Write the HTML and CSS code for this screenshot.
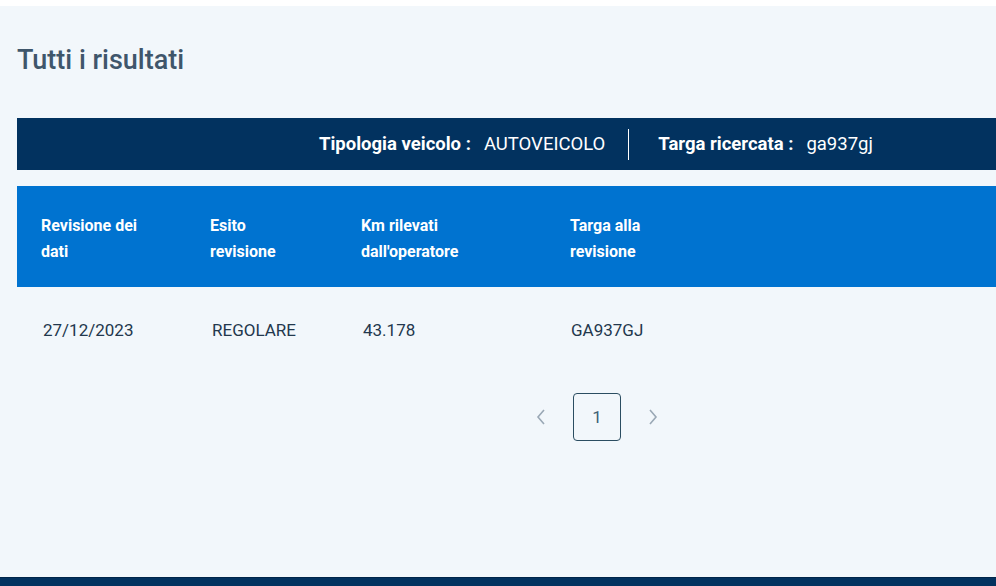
FILE: index.html
```html
<!DOCTYPE html>
<html lang="it">
<head>
<meta charset="utf-8">
<title>Tutti i risultati</title>
<link rel="stylesheet" href="styles.css">
</head>
<body>
<div class="topstrip"></div>
<main class="main">
  <h1 class="title">Tutti i risultati</h1>
  <div class="infobar">
    <div class="info">
      <span class="info-label">Tipologia veicolo :</span>
      <span class="info-value">AUTOVEICOLO</span>
    </div>
    <div class="info-sep"></div>
    <div class="info">
      <span class="info-label">Targa ricercata :</span>
      <span class="info-value">ga937gj</span>
    </div>
  </div>
  <div class="thead">
    <div class="th">Revisione dei<br>dati</div>
    <div class="th">Esito<br>revisione</div>
    <div class="th">Km rilevati<br>dall'operatore</div>
    <div class="th">Targa alla<br>revisione</div>
  </div>
  <div class="trow">
    <div class="td">27/12/2023</div>
    <div class="td">REGOLARE</div>
    <div class="td">43.178</div>
    <div class="td">GA937GJ</div>
  </div>
  <nav class="pager">
    <span class="pager-arrow">
      <svg width="12" height="18" viewBox="0 0 12 18"><path d="M9 2 L3 9 L9 16" fill="none" stroke="#9aa8b5" stroke-width="1.6"/></svg>
    </span>
    <span class="pager-page">1</span>
    <span class="pager-arrow">
      <svg width="12" height="18" viewBox="0 0 12 18"><path d="M3 2 L9 9 L3 16" fill="none" stroke="#9aa8b5" stroke-width="1.6"/></svg>
    </span>
  </nav>
</main>
<footer class="footer"></footer>
</body>
</html>
```
FILE: styles.css
```css
html, body {
  margin: 0;
  padding: 0;
}
body {
  width: 996px;
  height: 586px;
  overflow: hidden;
  display: flex;
  flex-direction: column;
  background: #ffffff;
  font-family: Roboto, "Noto Sans", sans-serif;
}
.topstrip {
  height: 6px;
  background: #ffffff;
  flex: none;
}
.main {
  flex: 1;
  background: #f2f7fb;
  padding-left: 17px;
  display: flex;
  flex-direction: column;
}
.title {
  margin: 38px 0 0 0;
  font-size: 27px;
  line-height: 32px;
  font-weight: 500;
  color: #3f566b;
}
.infobar {
  margin-top: 42px;
  height: 52px;
  background: #02325f;
  display: flex;
  align-items: center;
  padding-left: 302px;
  color: #ffffff;
  font-size: 18.5px;
}
.info {
  display: flex;
  align-items: center;
  gap: 13px;
  white-space: nowrap;
}
.info-label {
  font-weight: 700;
}
.info-value {
  font-weight: 400;
}
.info-sep {
  width: 1px;
  height: 31px;
  background: #ffffff;
  margin: 0 29px 0 23px;
}
.thead {
  margin-top: 16px;
  height: 101px;
  box-sizing: border-box;
  background: #0073d0;
  display: grid;
  grid-template-columns: 169px 151px 209px 1fr;
  align-content: center;
  padding: 4px 0 0 24px;
  color: #ffffff;
}
.th {
  font-size: 16px;
  line-height: 26px;
  font-weight: 700;
}
.trow {
  height: 86px;
  display: grid;
  grid-template-columns: 169px 151px 208px 1fr;
  align-items: center;
  padding-left: 26px;
  color: #23384d;
  font-size: 17px;
}
.pager {
  margin-top: 20px;
  display: flex;
  align-items: center;
  padding-left: 518px;
  gap: 26px;
}
.pager-arrow {
  display: flex;
  align-items: center;
  width: 12px;
  height: 18px;
}
.pager-page {
  width: 48px;
  height: 48px;
  box-sizing: border-box;
  border: 1px solid #2b4d61;
  border-radius: 4px;
  display: flex;
  align-items: center;
  justify-content: center;
  color: #3f6275;
  font-size: 17px;
}
.footer {
  height: 9px;
  flex: none;
  background: #02325f;
  border-top: 1px solid #00264a;
  box-sizing: border-box;
}
```
